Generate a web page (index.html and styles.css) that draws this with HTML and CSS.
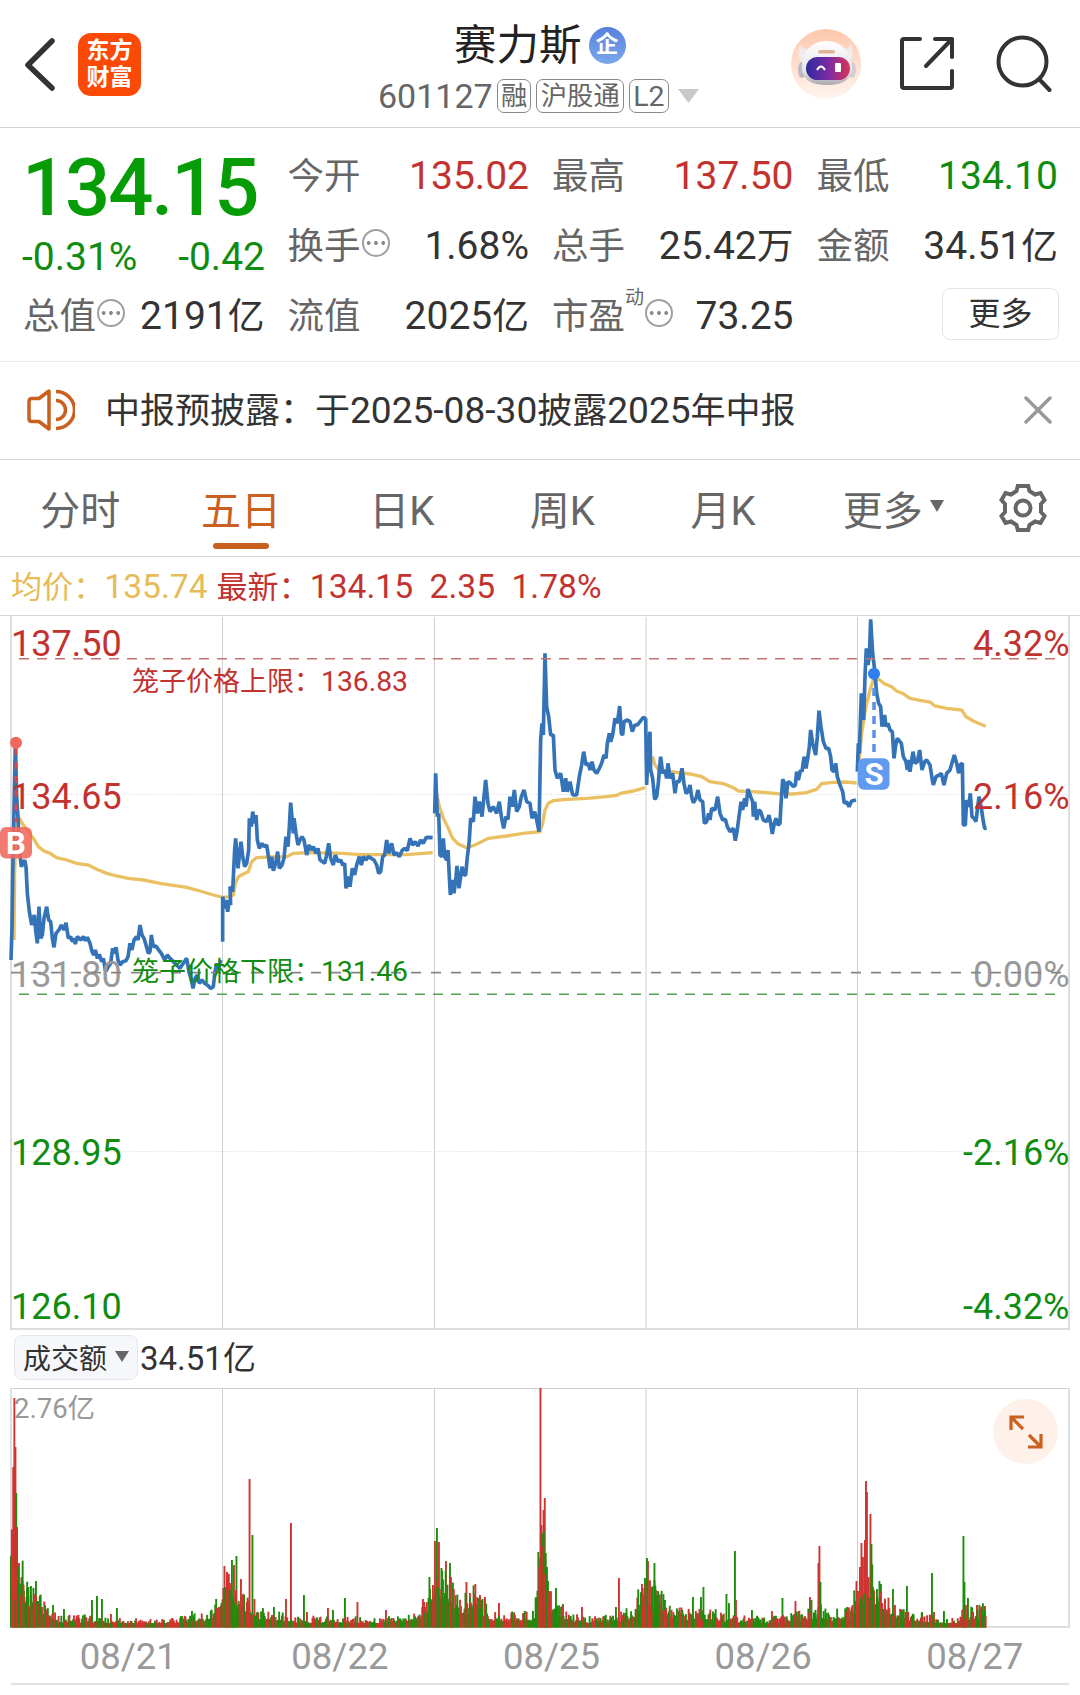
FILE: index.html
```html
<!DOCTYPE html>
<html lang="zh-CN">
<head>
<meta charset="utf-8">
<title>赛力斯 601127</title>
<link rel="stylesheet" href="styles.css">
</head>
<body>
<header class="topbar">
  <div class="topbar-left">
    <svg class="back" width="32" height="56" viewBox="0 0 32 56"><path d="M27 5 3 29 27 52" fill="none" stroke="#333" stroke-width="5.500" stroke-linecap="round" stroke-linejoin="round"/></svg>
    <div class="logo"><span>东方</span><span>财富</span></div>
  </div>
  <div class="topbar-title">
    <div class="name">赛力斯<span class="corp">企</span></div>
    <div class="code"><span class="num">601127</span><span class="tag">融</span><span class="tag">沪股通</span><span class="tag tag-l2">L2</span><svg class="drop" width="21" height="14" viewBox="0 0 21 14"><path d="M0 0h21L10.500 14z" fill="#c8c8c8"/></svg></div>
  </div>
  <div class="topbar-right">
    <svg width="70" height="70" viewBox="0 0 70 70">
      <defs>
        <linearGradient id="halo" x1="0" y1="0" x2="0" y2="1"><stop offset="0" stop-color="#fdc7ab"/><stop offset="1" stop-color="#fff5ef"/></linearGradient>
        <linearGradient id="visor"><stop offset="0" stop-color="#2c2a9c"/><stop offset=".5" stop-color="#7a2ba6"/><stop offset="1" stop-color="#d93556"/></linearGradient>
        <linearGradient id="shell" x1="0" y1="0" x2="0" y2="1"><stop offset="0" stop-color="#fff"/><stop offset=".7" stop-color="#e6e3e7"/><stop offset="1" stop-color="#a9a7ae"/></linearGradient>
      </defs>
      <circle cx="35" cy="35" r="35" fill="url(#halo)"/>
      <path d="M9 15q1 5 9 5l4 10-9 6q-9-9-4-21zM60 15q-1 5-9 5l-4 10 9 6q9-9 4-21z" fill="#f1eaea"/>
      <ellipse cx="11" cy="41" rx="4" ry="8" fill="#bdb9c2"/><ellipse cx="61" cy="41" rx="4" ry="8" fill="#d2ced6"/>
      <path d="M35 12c15 0 26 11 26 26 0 13-10 18-25 18s-25-5-25-18c0-15 10-26 24-26z" fill="url(#shell)"/>
      <rect x="27" y="21" width="17" height="3.500" rx="1.700" fill="#dfb694"/>
      <rect x="15" y="28" width="44" height="23" rx="11.500" fill="url(#visor)"/>
      <path d="M26 41q4-7 8 0" fill="none" stroke="#fff" stroke-width="2"/>
      <rect x="44" y="34" width="6" height="9" rx="1" fill="#fff"/>
    </svg>
    <svg width="54" height="54" viewBox="0 0 54 54"><g fill="none" stroke="#333" stroke-width="4" stroke-linecap="round" stroke-linejoin="round"><path d="M20 2H4Q2 2 2 4v45q0 2 2 2h46q2 0 2-2V34"/><path d="M35 2h17v18M51 3 26 29"/></g></svg>
    <svg width="56" height="58" viewBox="0 0 56 58"><g fill="none" stroke="#333" stroke-width="4" stroke-linecap="round"><circle cx="26.500" cy="26.500" r="24"/><path d="m44 45 9.500 10"/></g></svg>
  </div>
</header>

<section class="quote">
  <div class="quote-price">
    <div class="last">134.15</div>
    <div class="change"><span>-0.31%</span><span>-0.42</span></div>
  </div>
  <div class="cell"><span class="label">今开</span><span class="val up">135.02</span></div>
  <div class="cell"><span class="label">最高</span><span class="val up">137.50</span></div>
  <div class="cell"><span class="label">最低</span><span class="val down">134.10</span></div>
  <div class="cell"><span class="label">换手<i class="dots"></i></span><span class="val">1.68%</span></div>
  <div class="cell"><span class="label">总手</span><span class="val">25.42<b>万</b></span></div>
  <div class="cell"><span class="label">金额</span><span class="val">34.51<b>亿</b></span></div>
  <div class="cell"><span class="label">总值<i class="dots"></i></span><span class="val">2191<b>亿</b></span></div>
  <div class="cell"><span class="label">流值</span><span class="val">2025<b>亿</b></span></div>
  <div class="cell"><span class="label">市盈<sup>动</sup><i class="dots"></i></span><span class="val">73.25</span></div>
  <div class="cell cell-more"><button class="more">更多</button></div>
</section>

<section class="notice">
  <svg width="48" height="42" viewBox="0 0 48 42"><g fill="none" stroke="#c9601f" stroke-width="3.500" stroke-linejoin="round"><path d="M22 2v38L12 32.500H5q-3 0-3-3v-17q0-3 3-3h7z"/><path d="M29 11.500a9.500 9.500 0 0 1 0 19M29 2.500a18.500 18.500 0 0 1 0 37"/></g></svg>
  <p><b>中报预披露：于</b>2025-08-30<b>披露</b>2025<b>年中报</b></p>
  <svg class="close" width="28" height="28" viewBox="0 0 28 28"><path d="M2 2 26 26M26 2 2 26" stroke="#999" stroke-width="3.500" stroke-linecap="round"/></svg>
</section>

<nav class="tabs">
  <span class="tab">分时</span>
  <span class="tab active">五日</span>
  <span class="tab">日K</span>
  <span class="tab">周K</span>
  <span class="tab">月K</span>
  <span class="tab tab-more">更多<svg class="tri" width="14" height="12" viewBox="0 0 14 12"><path d="M0 0h14L7 12z" fill="#666"/></svg></span>
  <svg class="gear" width="50" height="50" viewBox="-25 -25 50 50"><g fill="none" stroke="#666" stroke-width="4"><path d="M-5.200-22H5.200L6.500-17 12-13.500 17.500-15 21.500-8 18-4V4L21.500 8 17.500 15 12 13.500 6.500 17 5.200 22H-5.200L-6.500 17-12 13.500-17.500 15-21.500 8-18 4V-4L-21.500-8-17.500-15-12-13.500-6.500-17z"/><circle r="7.500"/></g></svg>
</nav>

<div class="legend">
  <span class="avg"><b>均价：</b>135.74</span><span class="up"><b>最新：</b>134.15</span><span class="up">2.35</span><span class="up">1.78%</span>
</div>

<svg class="chart" width="1080" height="715" viewBox="0 615 1080 715">
  <path d="M0 615.500H1080" stroke="#d6d6d6"/>
  <path d="M11 616V1329M1069 616V1329M10 1329H1070" stroke="#dedede" stroke-width="2"/>
  <path d="M222.500 617V1329M434.500 617V1329M646 617V1329M857.500 617V1329" stroke="#d0d0d0"/>
  <path d="M11 794.500H1069M11 1151.500H1069" stroke="#dcdcdc" stroke-dasharray="1 1.500"/>
  <g class="avg-line" transform="translate(0 610) scale(.33333)">
    <path d="M42 990 44 780 50 640 60 628 70 645 85 665 100 685 115 710 130 722 150 730 170 743 200 750 230 760 265 765 290 778 320 790 350 798 385 805 430 810 480 820 520 826 560 832 600 843 640 855 665 861"/>
    <path transform="translate(630)" d="M38 862 60 860 70 855 76 820 85 800 100 792 115 785 125 755 140 743 180 741 230 740 250 730 300 728 400 730 450 734 520 734 590 734 668 728"/>
    <path transform="translate(1260)" d="M44 610 50 550 58 590 70 625 85 655 98 685 115 702 140 713 165 705 205 685 260 678 310 670 360 665 368 640 375 600 385 580 400 572 440 568 500 565 560 560 590 556 605 549 640 543 675 533"/>
    <path transform="translate(1920)" d="M38 440 45 465 55 478 80 483 110 487 150 492 185 500 210 515 250 521 280 533 295 543 340 545 380 548 420 552 460 552 500 548 530 538 545 521 580 517 620 516 650 519"/>
    <path transform="translate(2520)" d="M55 480 65 370 78 290 90 240 100 210 115 207 135 222 155 230 170 243 190 251 210 265 240 271 270 276 285 288 320 295 365 300 378 320 400 333 437 349"/>
  </g>
  <g class="price-line" transform="translate(0 610) scale(.33333)">
    <path d="M33 1050 36 950 38 800 42 600 46 400 50 560 55 640 58 720 64 770 74 750 78 770 82 850 88 905 95 945 103 915 107 960 112 1000 117 890 122 985 127 975 132 925 140 890 146 930 152 935 157 985 162 1012 168 970 178 958 184 945 192 960 198 938 205 985 212 980 217 995 222 985 226 1002 232 980 242 990 250 980 256 992 262 982 270 1000 276 1025 282 1035 286 1020 292 1045 298 1033 305 1055 310 1045 317 1085 325 1070 332 1060 338 1015 342 1030 348 1012 354 1050 360 1065 368 1055 378 1052 384 1040 390 1000 396 1020 402 990 410 980 414 990 420 945 426 975 432 985 438 1005 445 1030 450 1025 454 975 460 1010 468 1008 476 1020 484 1030 494 1050 502 1035 510 1045 520 1055 530 1065 540 1075 550 1060 560 1045 568 1090 574 1110 579 1135 585 1105 592 1095 598 1120 606 1110 614 1120 622 1125 632 1135 640 1130 645 1085 650 1060 656 1075 662 1050"/>
    <path transform="translate(630)" d="M38 995V860L44 895 48 870 53 905 58 870 62 885 60 830 68 845 72 760 74 720 77 685 84 775 90 720 93 695 98 740 104 770 110 760 116 720 118 625 124 650 128 605 134 640 138 615 142 690 148 715 156 700 162 710 170 705 176 745 180 775 185 740 190 782 197 760 203 725 208 775 216 765 222 745 228 680 234 710 238 650 242 578 250 670 252 625 258 670 264 705 270 690 276 680 282 690 290 735 297 705 304 720 310 710 318 730 324 715 330 750 338 755 344 760 350 735 356 700 362 745 370 765 376 735 384 755 392 750 398 765 404 760 408 835 414 800 420 830 427 775 434 795 440 765 448 740 454 765 460 740 468 750 475 740 484 745 492 750 500 765 506 790 512 785 518 740 524 735 530 690 537 730 545 700 552 735 560 728 568 740 576 722 584 715 592 722 600 685 608 705 616 695 624 708 632 690 640 700 648 683 656 682 668 683"/>
    <path transform="translate(1260)" d="M44 610 47 490 52 620 56 610 60 735 66 740 70 685 74 740 80 750 84 720 88 800 91 855 97 810 102 850 108 800 111 768 117 835 122 800 126 770 132 795 137 795 142 740 146 710 148 690 152 625 160 635 165 560 172 610 178 575 186 620 192 560 197 510 204 580 210 605 220 590 230 610 238 575 244 620 251 655 258 620 264 628 270 560 277 590 283 540 290 605 298 590 304 560 312 540 320 575 330 580 336 625 344 605 350 630 357 665 360 500 362 390 366 340 370 375 375 130 380 290 386 320 392 375 400 375 405 480 412 505 422 490 430 545 437 505 442 545 450 515 458 555 470 555 478 500 485 465 491 425 498 465 505 460 510 480 516 455 522 480 530 490 538 475 545 460 552 435 558 445 562 400 568 370 572 395 578 375 585 325 592 340 599 288 604 370 608 375 612 335 622 330 630 335 637 365 644 345 652 345 660 335 670 322 678 327"/>
    <path transform="translate(1920)" d="M17 325 20 525 24 430 30 365 32 480 38 505 44 568 50 560 55 520 58 480 62 440 68 490 75 480 80 505 84 460 90 505 98 490 105 550 110 515 118 515 126 475 132 520 138 550 144 545 150 525 155 560 160 578 168 565 174 540 180 570 188 575 193 640 200 635 206 610 210 630 215 595 225 600 233 560 240 610 248 630 256 628 262 650 270 665 280 655 286 692 291 665 297 620 303 575 308 600 314 565 318 590 324 537 332 560 338 575 340 620 344 575 350 630 356 600 362 605 370 630 380 635 387 615 392 640 397 672 403 640 408 625 414 645 420 640 422 600 428 508 434 520 438 565 444 515 452 520 460 530 466 525 470 485 475 510 482 480 486 485 490 455 493 440 498 475 504 440 508 410 512 360 518 400 527 435 532 380 537 302 543 350 550 395 558 415 566 415 572 440 576 480 582 485 587 460 592 500 600 525 608 545 613 580 620 575 627 590 635 573 648 570"/>
    <path transform="translate(2520)" d="M52 485 55 400 58 430 64 250 71 330 75 200 79 115 84 165 88 140 92 28 98 130 104 180 110 250 116 280 122 290 126 350 134 315 138 350 144 340 150 360 157 365 162 445 168 400 172 385 184 400 190 440 198 455 202 480 205 450 210 485 219 425 225 460 232 455 239 420 246 480 254 455 260 450 270 465 276 505 280 525 288 500 298 495 304 490 312 525 320 490 330 480 337 455 343 435 350 460 356 490 360 465 367 460 370 645 376 645 380 570 386 590 391 550 396 620 402 625 408 635 412 600 417 560 425 600 430 635 434 655 440 655"/>
  </g>
  <path d="M16 748V822" stroke="#d8484a" stroke-width="3" stroke-dasharray="7 7"/>
  <circle cx="16" cy="742.700" r="6" fill="#f0685c"/>
  <path d="M874 688V754" stroke="#5b92e4" stroke-width="3.500" stroke-dasharray="8 6"/>
  <circle cx="874" cy="673.700" r="6" fill="#2f7ff0"/>
  <g class="axis">
    <text class="f-up" x="11" y="656">137.50</text><text class="f-up end" x="1069.500" y="656">4.32%</text>
    <text class="f-up" x="11" y="809">134.65</text><text class="f-up end" x="1069.500" y="809">2.16%</text>
    <text class="f-flat" x="11" y="987">131.80</text><text class="f-flat end" x="1069.500" y="987">0.00%</text>
    <text class="f-down" x="11" y="1165">128.95</text><text class="f-down end" x="1069.500" y="1165">-2.16%</text>
    <text class="f-down" x="11" y="1319">126.10</text><text class="f-down end" x="1069.500" y="1319">-4.32%</text>
  </g>
  <path d="M11 972.700H1062" stroke="#858585" stroke-width="1.700" stroke-dasharray="10 10"/>
  <path d="M19 658.700H1056" stroke="#c4736c" stroke-width="1.500" stroke-dasharray="10 8"/>
  <path d="M19 994.300H1056" stroke="#55a355" stroke-width="1.500" stroke-dasharray="10 8"/>
  <g class="cage"><text class="f-up" x="132" y="690.500">笼子价格上限：<tspan>136.83</tspan></text><text class="f-down" x="132" y="980.500">笼子价格下限：<tspan>131.46</tspan></text></g>
  <rect x="0" y="827" width="32" height="31.500" rx="6" fill="#f0685c" fill-opacity=".88"/>
  <text class="mark" x="16" y="853.500">B</text>
  <rect x="858" y="758.300" width="31.500" height="31.500" rx="6" fill="#619bf0"/>
  <text class="mark" x="874" y="785">S</text>
</svg>

<div class="volume-head"><span class="picker">成交额<svg width="14" height="11" viewBox="0 0 14 11"><path d="M0 0h14L7 11z" fill="#666"/></svg></span><span class="turnover">34.51亿</span></div>

<div class="volume">
  <svg width="1080" height="240" viewBox="0 1388 1080 240">
    <path d="M10 1388.500H1070M222.500 1388V1627M434.500 1388V1627M646 1388V1627M857.500 1388V1627" stroke="#d0d0d0"/>
    <path d="M11 1388V1627M1069 1388V1627M10 1627H1070" stroke="#dedede" stroke-width="2"/>
    <text class="vol-max" x="14" y="1418">2.76亿</text>
    <g id="bars"></g>
  </svg>
  <button class="expand"><svg width="34" height="34" viewBox="0 0 34 34"><path d="M2 15V2H15M2.500 2.500 14 14M32 19V32H19M31.500 31.500 20 20" fill="none" stroke="#cb611f" stroke-width="3.200"/></svg></button>
</div>

<div class="dates"><span>08/21</span><span>08/22</span><span>08/25</span><span>08/26</span><span>08/27</span></div>
<script src="volume.js"></script>
</body>
</html>
```
FILE: styles.css
```css
* { box-sizing: border-box; }
body { margin: 0; width: 1080px; background: #fff; color: #333; font-family: Roboto, "Noto Sans CJK SC", sans-serif; }
svg { display: block; flex: none; }
button { font: inherit; color: inherit; margin: 0; padding: 0; }
.up { color: #c2322f; }
.down { color: #108c10; }

.topbar { display: grid; grid-template-columns: 379px 1fr 289px; height: 128px; border-bottom: 1px solid #d3d3d3; }
.topbar-left { display: flex; align-items: center; gap: 21px; padding: 1px 0 0 25px; }
.logo { display: flex; flex-direction: column; align-items: center; justify-content: center; width: 63px; height: 63px; border-radius: 13px; background: #fb4a08; color: #fff; font-size: 23px; line-height: 27px; font-weight: 700; }
.topbar-title { display: flex; flex-direction: column; padding-top: 21px; }
.name { display: flex; align-items: center; gap: 7px; height: 50px; padding-left: 75px; font-size: 42.500px; line-height: 50px; color: #222; }
.corp { width: 37px; height: 37px; margin-top: -2px; border-radius: 50%; background: linear-gradient(#5580de, #7ba8ea); color: #fff; font-size: 23px; line-height: 36px; font-weight: 700; text-align: center; }
.code { display: flex; align-items: center; height: 50px; margin-left: -1px; font-size: 34px; color: #666; }
.num { width: 119px; }
.tag { height: 34px; margin-right: 5px; padding: 0 3.500px; border: 1px solid #888; border-radius: 7px; font-size: 26.300px; line-height: 33px; }
.tag:nth-child(2) { padding: 0 3px; }
.tag-l2 { padding: 0 3px; font-size: 28.500px; line-height: 34px; }
.drop { margin-left: 4px; }
.topbar-right { display: flex; align-items: center; }
.topbar-right svg:nth-child(2) { margin-left: 39px; }
.topbar-right svg:nth-child(3) { margin: 0 0 0 42px; }

.quote { display: grid; grid-template-columns: repeat(4, 240px); grid-template-rows: repeat(3, 70px); column-gap: 24.500px; height: 234px; padding: 13px 0 0 24px; border-bottom: 1px solid #ececec; }
.quote-price { grid-row: span 2; color: #069c06; }
.last { height: 93px; margin-left: -2px; font-size: 79.500px; line-height: 94px; font-weight: 500; letter-spacing: -2.100px; }
.change { display: flex; justify-content: space-between; margin: 0 -1px 0 -2px; font-size: 39px; line-height: 46px; color: #108c10; }
.cell { display: flex; align-items: center; justify-content: space-between; font-size: 39px; line-height: 70px; white-space: nowrap; }
.label { display: flex; align-items: center; margin-left: -1px; padding-top: 1px; font-size: 36.500px; color: #666; }
.val { margin-right: -0.500px; }
.val b { font-size: 36.700px; font-weight: 400; }
.label sup { align-self: flex-start; margin-top: -19px; font-size: 19px; }
.dots { width: 28px; height: 28px; margin: -7px 0 0 1px; border: 2px solid #a0a0a0; border-radius: 50%; background: radial-gradient(circle, #888 1.600px, transparent 2.200px) 1px 8px / 7.300px 8px repeat-x; }
.cell-more { justify-content: flex-end; }
.more { width: 117px; height: 52px; margin: -4px -1px 0 0; padding-left: 1px; border: 1.500px solid #e3e5e8; border-radius: 8px; background: #fff; font-size: 32px; line-height: 48px; }

.notice { display: flex; align-items: center; height: 98px; padding: 0 28px 2px 27px; border-bottom: 1px solid #d3d3d3; font-size: 37.100px; }
.notice p { flex: 1; margin: -4px 0 0 30px; }
.notice b { font-size: 35px; font-weight: 400; }

.tabs { display: flex; align-items: center; height: 97px; border-bottom: 1px solid #d3d3d3; font-size: 40px; color: #666; }
.tab { display: flex; align-items: center; justify-content: center; width: 160.700px; height: 96px; }
.tab-more { padding-left: 19px; }
.active { position: relative; color: #c9601f; }
.active::after { content: ""; position: absolute; left: 52px; bottom: 7px; width: 56px; height: 6.500px; border-radius: 4px; background: #c9601f; }
.tri { margin: -4px 0 0 7px; }
.gear { margin-left: 33.500px; }

.legend { display: flex; height: 58px; padding-left: 11px; font-size: 33.600px; line-height: 60px; }
.legend span { margin-right: 16.500px; }
.legend b { font-size: 31.100px; font-weight: 400; }
.legend .avg { margin-right: 9px; color: #e6bb58; }

.axis { font-size: 36px; }
.cage { font-size: 27px; }
.cage tspan { font-size: 28.300px; }
.f-up { fill: #c2322f; }
.f-down { fill: #108c10; }
.f-flat { fill: #999; }
.end { text-anchor: end; }
.avg-line, .price-line { fill: none; stroke-width: 11; }
.avg-line { stroke: #eac062; stroke-width: 10; }
.price-line { stroke: #3573b8; stroke-linejoin: bevel; }
.mark { fill: #fff; font-size: 31px; font-weight: 700; text-anchor: middle; }

.volume-head { display: flex; align-items: center; gap: 2px; height: 58px; padding: 0 0 3px 14px; font-size: 33px; }
.turnover { margin-top: -3px; }
.picker { display: flex; align-items: center; gap: 8px; width: 124px; height: 45px; padding: 0 0 2px 8px; border: 1.500px solid #e4e6ea; border-radius: 8px; background: #f6f7fa; font-size: 28px; }
.volume { position: relative; height: 240px; }
.vol-max { fill: #999; font-size: 27.500px; }
.expand { position: absolute; right: 22px; top: 11px; display: flex; align-items: center; justify-content: center; width: 65px; height: 65px; border: 0; border-radius: 50%; background: #fef1ea; }
.dates { display: grid; grid-template-columns: repeat(5, 1fr); height: 57px; margin: 0 11px; border-bottom: 2px solid #e2e2e2; font-size: 36.500px; line-height: 58px; color: #999; text-align: center; }
.dates span { padding-left: 23px; }
```
FILE: volume.js
```js
// Typical turnover level along the time axis: [x, height]
const level = [[11,58],[20,50],[26,30],[36,24],[48,14],[58,8],[90,7],[130,5],[160,5],[180,7],[200,9],[212,12],[219,20],[223,42],[232,30],[240,28],[250,20],[262,12],[280,9],[300,6],[340,7],[380,5],[405,9],[415,12],[425,22],[433,38],[440,45],[450,30],[460,22],[475,26],[483,18],[490,10],[510,9],[535,12],[541,80],[548,30],[555,20],[565,12],[585,6],[600,8],[615,7],[630,12],[640,24],[648,34],[656,28],[665,18],[680,12],[700,11],[720,10],[740,7],[765,6],[800,10],[820,14],[830,10],[850,15],[858,30],[868,45],[878,28],[890,18],[903,12],[925,8],[940,5],[955,6],[963,12],[975,12],[986,16]];
// Individual minutes that stand out: "x height side"
const peaks = "12.5 92 r,13.3 160 r,14.4 229 r,15.5 180 r,16.3 134 g,17.1 100 r,19 64 r,21.5 50 r,22.5 46 g,24 36 g,27 38 g,28.5 40 g,31 41 g,36 46 g,33 24 g,42 20 r,53 22 g,64 18 g,92 27 g,97 31 g,102 28 g,111 13 r,117 19 g,192 16 g,219 20 r,224.5 61 r,227 52 r,230 44 r,232 67 g,234 62 r,236.5 71 g,241 48 r,249.6 148 r,252.5 92 g,254.5 28 r,274 20 g,286 28 r,291 104 r,304 32 g,307 15 r,328 19 r,333 17 g,345 29 g,357.5 25 r,386 17 r,423 28 r,425 20 r,430 38 g,433 42 r,435 86 r,437 99 g,439 85 r,441.5 59 g,446 66 r,450 64 g,451 50 r,453 38 g,466.5 45 r,470 34 r,474 33 r,480 32 r,485 30 r,499 24 r,536.5 30 g,540.5 239 r,541.5 102 r,543.6 117 r,544.8 129 r,545.8 74 g,547 60 g,548 46 g,550 33 g,556 39 g,563 23 g,582 20 r,619 49 r,616 20 g,642 43 r,645 49 g,647 69 g,648 66 r,651.5 40 r,654.5 64 g,656 37 r,660 25 r,665 27 g,693 30 g,701 30 g,703.5 40 g,726.5 33 g,729 24 g,735 76 g,736 27 r,752 17 g,772 16 r,782.5 29 g,795.5 26 r,810 30 r,811.5 27 g,818.5 64 r,819.5 81 r,820.5 45 g,847 20 g,856.5 46 r,858 36 r,860 60 r,861.5 84 r,863 70 r,865 87 r,866 146 r,867 135 r,870.5 113 r,871.5 83 g,873 35 r,877 38 g,881 43 g,885 27 g,893 38 g,895 22 r,907 41 g,922 15 g,932 54 g,934 15 r,944 16 g,963.5 91 g,964.5 45 g,966 22 r,968 29 g,977 22 r,985 21 r";

const bars = document.getElementById("bars");
let seed = 601127;
function random() {
  seed = (seed * 16807) % 2147483647;
  return seed / 2147483647;
}
function bar(x, height, side) {
  const rect = document.createElementNS("http://www.w3.org/2000/svg", "rect");
  rect.setAttribute("x", x - 1);
  rect.setAttribute("y", 1627 - height);
  rect.setAttribute("width", 1.9);
  rect.setAttribute("height", height + 0.5);
  rect.setAttribute("fill", side === "r" ? "#cf3430" : "#1d8c0c");
  bars.append(rect);
}
function levelAt(x) {
  let i = 1;
  while (i < level.length - 1 && level[i][0] < x) i++;
  const [x0, h0] = level[i - 1];
  const [x1, h1] = level[i];
  return h0 + (h1 - h0) * (x - x0) / (x1 - x0);
}
for (const peak of peaks.split(",")) {
  const [x, height, side] = peak.split(" ");
  bar(+x, +height, side);
}
for (let x = 11; x < 986; x += 0.9) {
  const r = random();
  bar(x, Math.max(4, levelAt(x) * (0.5 + 1.1 * r * r + 0.2 * random())), random() < 0.5 ? "r" : "g");
}
```
